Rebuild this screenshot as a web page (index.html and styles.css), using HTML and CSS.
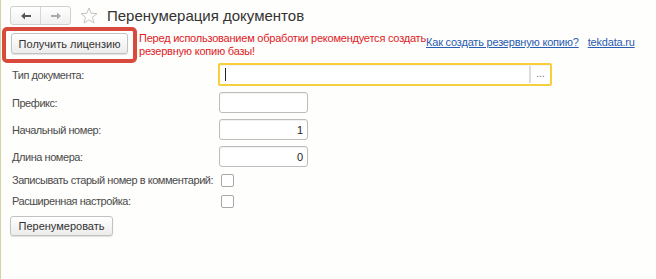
FILE: index.html
```html
<!DOCTYPE html>
<html lang="ru">
<head>
<meta charset="utf-8">
<title>Перенумерация документов</title>
<link rel="stylesheet" href="styles.css">
</head>
<body>
<div class="page">
  <div class="header">
    <div class="nav">
      <span class="nav-btn">
        <svg width="12" height="10" viewBox="0 0 12 10"><path d="M1 5 L5 1.5 L5 4 L11 4 L11 6 L5 6 L5 8.5 Z" fill="#555"/></svg>
      </span>
      <span class="nav-btn">
        <svg width="12" height="10" viewBox="0 0 12 10"><path d="M11 5 L7 1.5 L7 4 L1 4 L1 6 L7 6 L7 8.5 Z" fill="#aaa"/></svg>
      </span>
    </div>
    <svg class="star" width="18" height="17" viewBox="0 0 18 17"><path d="M9 1 L11.2 6.3 L17 6.6 L12.5 10.3 L14 16 L9 12.9 L4 16 L5.5 10.3 L1 6.6 L6.8 6.3 Z" fill="none" stroke="#c4c4c4" stroke-width="1"/></svg>
    <h1 class="title">Перенумерация документов</h1>
  </div>

  <div class="toolbar">
    <div class="highlight">
      <button class="btn">Получить лицензию</button>
    </div>
    <div class="warning">Перед использованием обработки рекомендуется создать<br>резервную копию базы!</div>
    <a class="link" href="#">Как создать резервную копию?</a>
    <a class="link" href="#">tekdata.ru</a>
  </div>

  <div class="form">
    <label class="lbl">Тип документа:</label>
    <div class="field field-doc">
      <span class="caret"></span>
      <span class="choose">...</span>
    </div>

    <label class="lbl">Префикс:</label>
    <div class="field field-short"></div>

    <label class="lbl">Начальный номер:</label>
    <div class="field field-short num">1</div>

    <label class="lbl">Длина номера:</label>
    <div class="field field-short num">0</div>

    <label class="lbl chk-lbl">Записывать старый номер в комментарий:</label>
    <div class="chk-cell"><span class="checkbox"></span></div>

    <label class="lbl chk-lbl">Расширенная настройка:</label>
    <div class="chk-cell"><span class="checkbox"></span></div>
  </div>

  <div class="actions">
    <button class="btn btn-run">Перенумеровать</button>
  </div>
</div>
</body>
</html>
```

FILE: styles.css
```css
html, body {
  margin: 0;
  padding: 0;
  height: 100%;
}
body {
  background: #fefefc;
  font-family: "Liberation Sans", Arial, sans-serif;
  font-size: 11px;
  color: #4a4a4a;
}
.page {
  min-height: 100%;
  box-sizing: border-box;
  border-left: 1px solid #d6d2a6;
  padding: 6px 0 0 9px;
}
.header {
  display: flex;
  align-items: center;
  height: 19px;
}
.nav {
  display: flex;
  height: 17px;
  border: 1px solid #cfcfcf;
  border-radius: 3px;
  background: linear-gradient(#ffffff, #f0f0f0);
}
.nav-btn {
  width: 29px;
  display: flex;
  align-items: center;
  justify-content: center;
}
.nav-btn + .nav-btn {
  border-left: 1px solid #d6d6d6;
}
.star {
  margin-left: 9px;
}
.title {
  margin: 0 0 0 9px;
  font-size: 15px;
  font-weight: normal;
  color: #333;
  line-height: 19px;
}
.toolbar {
  display: flex;
  align-items: flex-start;
  margin: 2px 0 0 -8px;
  white-space: nowrap;
}
.highlight {
  border: 4px solid #d84a3c;
  border-radius: 5px;
  padding: 2px 5px 5px 5px;
}
.btn {
  font-family: "Liberation Sans", Arial, sans-serif;
  font-size: 11px;
  color: #333;
  height: 21px;
  padding: 0 10px;
  border: 1px solid #c2c2c2;
  border-radius: 3px;
  background: linear-gradient(#ffffff, #ececec);
  box-shadow: 0 1px 1px rgba(0,0,0,0.12);
}
.highlight .btn {
  width: 117px;
  padding: 0;
}
.warning {
  color: #e0201e;
  line-height: 13px;
  margin: 5px 0 0 2px;
  width: 287px;
  letter-spacing: -0.22px;
}
.link {
  color: #2a5cb0;
  text-decoration: underline;
  margin: 9px 0 0 0;
  letter-spacing: -0.2px;
}
.link + .link {
  margin-left: 9px;
}
.form {
  display: grid;
  grid-template-columns: 208px auto;
  align-items: center;
  row-gap: 6px;
}
.lbl {
  padding-left: 2px;
  white-space: nowrap;
  letter-spacing: -0.45px;
}
.field {
  box-sizing: border-box;
  height: 21px;
  border: 1px solid #bdbdbd;
  border-radius: 3px;
  background: #fff;
  display: flex;
  align-items: center;
  box-shadow: inset 0 1px 1px rgba(0,0,0,0.06);
}
.field-doc {
  width: 334px;
  height: 23px;
  border: 2px solid #f6cf3a;
  border-radius: 2px;
}
.caret {
  width: 1px;
  height: 13px;
  background: #222;
  margin-left: 5px;
}
.choose {
  margin-left: auto;
  width: 19px;
  height: 17px;
  border-left: 2px solid #dcdcdc;
  color: #666;
  font-size: 10px;
  text-align: center;
  line-height: 15px;
}
.field-short {
  width: 89px;
  margin-left: 1px;
}
.num {
  justify-content: flex-end;
  padding-right: 4px;
  color: #222;
}
.chk-lbl {
  line-height: 15px;
}
.chk-cell {
  display: flex;
  padding-left: 3px;
}
.checkbox {
  width: 11px;
  height: 11px;
  border: 1px solid #a8a8a8;
  border-radius: 2px;
  background: #fff;
}
.actions {
  margin-top: 7px;
}
.btn-run {
  width: 103px;
  padding: 0;
  height: 20px;
}
```
